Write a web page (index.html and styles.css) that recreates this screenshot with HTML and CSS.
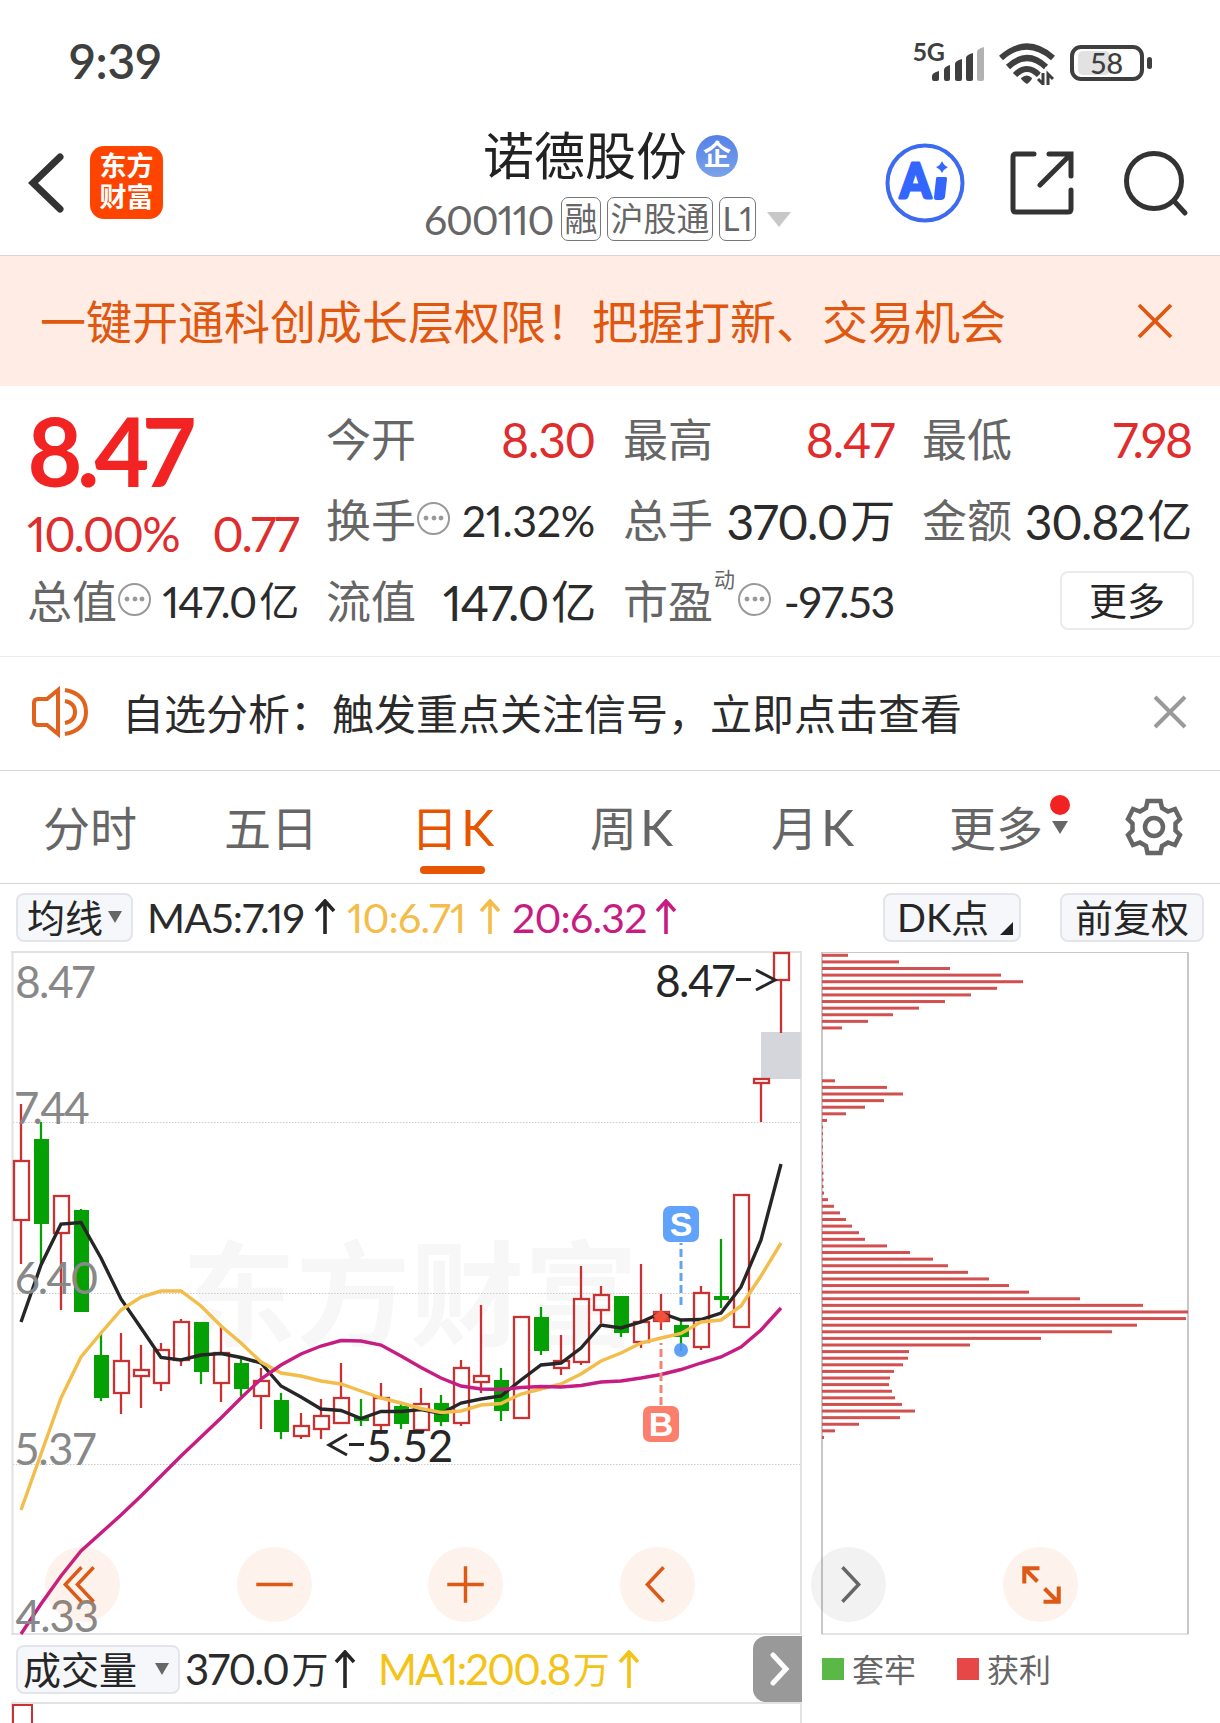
FILE: index.html
```
<!DOCTYPE html>
<html lang="zh-CN">

<head>
	<meta charset="UTF-8">
	<title>诺德股份 600110</title>
	<link rel="stylesheet" href="styles.css">
</head>

<body>

	<div class="status">
		<span class="clock">9:39</span>
		<div class="signals">
			<span class="net">5G</span>
			<svg class="bars" width="53" height="36" viewBox="0 0 53 36">
				<path d="M0 33v-3q0-3 7-5v8q0 2-2 2h-3q-2 0-2-2zM12 33v-9q0-3 6-5v14q0 2-2 2h-2q-2 0-2-2zM23 33v-15q0-3 7-5v20q0 2-2 2h-3q-2 0-2-2zM34 33v-21q0-3 7-5v26q0 2-2 2h-3q-2 0-2-2z" fill="#3f3f3f" />
				<path d="M45 33v-27q0-3 7-5v32q0 2-2 2h-3q-2 0-2-2z" fill="#b2b2b2" />
			</svg>
			<svg class="wifi" width="56" height="42" viewBox="0 0 56 42">
				<g fill="none" stroke="#3f3f3f" stroke-width="6">
					<path d="M2 15Q28 -8 54 15" />
					<path d="M9 24Q28 6 47 24" />
					<path d="M16 32Q28 20 40 32" />
				</g>
				<path d="M22 35q6-5 11 0q0 2-5 6q-6-4-6-6z" fill="#3f3f3f" />
				<path d="M44 30v11l-5-5M49 42v-11l5 5" fill="none" stroke="#fff" stroke-width="6" />
				<path d="M44 30v11l-5-5M49 42v-11l5 5" fill="none" stroke="#3f3f3f" stroke-width="3" />
			</svg>
			<div class="battery"><i></i><span>58</span></div>
		</div>
	</div>

	<header>
		<svg class="back" width="36" height="60" viewBox="0 0 36 60"><path d="M32 4L5 30L32 56" /></svg>
		<div class="logo"><span>东方</span><span>财富</span></div>
		<div class="stock">
			<div class="name">诺德股份<i>企</i></div>
			<div class="code"><b>600110</b><span>融</span><span>沪股通</span><span>L1</span><i></i></div>
		</div>
		<div class="actions">
			<svg width="80" height="80" viewBox="0 0 80 80">
				<circle cx="40" cy="40" r="37.5" fill="none" stroke="#3c6af0" stroke-width="4" />
				<text x="15" y="55" class="ai" textLength="31" lengthAdjust="spacingAndGlyphs">A</text>
				<path d="M52 34h9q1 0 1 2l-2 18q-1 3-4 3h-5q-2 0-2-3l2-18q0-2 1-2z" fill="#3366ff" />
				<path d="M57 18q2 5 6 6q-4 2-6 6q-2-4-6-6q4-1 6-6z" fill="#3366ff" />
			</svg>
			<svg width="64" height="64" viewBox="0 0 64 64" class="line">
				<path d="M24 3H6Q3 3 3 6V58Q3 61 6 61H58Q61 61 61 58V39M39 3H61V25M60 4L30 34" />
			</svg>
			<svg width="68" height="68" viewBox="0 0 68 68" class="line">
				<circle cx="32" cy="32" r="27.5" />
				<path d="M52 52L63 64" />
			</svg>
		</div>
	</header>

	<div class="banner">
		<span>一键开通科创成长层权限！把握打新、交易机会</span>
		<svg width="36" height="36" viewBox="0 0 36 36"><path d="M2 2L34 34M34 2L2 34" /></svg>
	</div>

	<section class="quote">
		<div class="price">
			<strong>8.47</strong>
			<p><span>10.00%</span><span>0.77</span></p>
		</div>
		<div class="cell"><label>今开</label><em class="red">8.30</em></div>
		<div class="cell"><label>最高</label><em class="red">8.47</em></div>
		<div class="cell"><label>最低</label><em class="red low">7.98</em></div>
		<div class="cell"><label>换手</label><i class="tip"></i><em class="small turnover">21.32%</em></div>
		<div class="cell"><label>总手</label><em>370.0<u>万</u></em></div>
		<div class="cell"><label>金额</label><em>30.82<u>亿</u></em></div>
		<div class="cell"><label>总值</label><i class="tip"></i><em class="small">147.0<u>亿</u></em></div>
		<div class="cell"><label>流值</label><em>147.0<u>亿</u></em></div>
		<div class="cell"><label>市盈</label><sup>动</sup><i class="tip"></i><em class="small">-97.53</em></div>
		<div class="cell"><button>更多</button></div>
	</section>

	<div class="notice">
		<svg class="horn" width="58" height="52" viewBox="0 0 58 52">
			<path d="M27 4L16 13H7Q3 13 3 17V35Q3 39 7 39H16L27 48ZM34 4Q55 8 55 26Q55 44 34 48M34 15Q44 17 44 26Q44 35 34 37" />
		</svg>
		<span>自选分析：触发重点关注信号，立即点击查看</span>
		<svg class="close" width="34" height="34" viewBox="0 0 34 34"><path d="M2 2L32 32M32 2L2 32" /></svg>
	</div>

	<nav>
		<a>分时</a>
		<a>五日</a>
		<a class="active">日<b>K</b></a>
		<a class="week">周<b>K</b></a>
		<a class="month">月<b>K</b></a>
		<a class="more">更多<i></i></a>
		<svg width="58" height="58" viewBox="-29 -29 58 58">
			<path d="M-6.5-26H6.5L8-19L14-15.500L21-18L26-8L21.500-3.500V3.500L26 8L21 18L14 15.500L8 19L6.500 26H-6.500L-8 19L-14 15.500L-21 18L-26 8L-21.500 3.500V-3.500L-26-8L-21-18L-14-15.500L-8-19Z" />
			<circle r="9" />
		</svg>
	</nav>

	<div class="ma">
		<button class="avg"><span>均线</span><i class="down"></i></button>
		<span class="ma5">MA5:7.19</span><svg class="up" width="22" height="36" viewBox="0 0 22 36"><path d="M11 2V35M2 12L11 2L20 12" /></svg>
		<span class="ma10">10:6.71</span><svg class="up gold" width="22" height="36" viewBox="0 0 22 36"><path d="M11 2V35M2 12L11 2L20 12" /></svg>
		<span class="ma20">20:6.32</span><svg class="up pink" width="22" height="36" viewBox="0 0 22 36"><path d="M11 2V35M2 12L11 2L20 12" /></svg>
		<button class="dk"><span>DK点</span><i></i></button>
		<button class="fq"><span>前复权</span></button>
	</div>

	<div class="chart">
		<svg width="1220" height="690" viewBox="0 949 1220 690">
			<text x="182" y="1337" class="watermark" textLength="456">东方财富</text>
			<g class="grid">
				<path d="M13 1122.500H801M13 1293.500H801M13 1464.500H801" />
			</g>
			<path class="frame" d="M12.500 952V1634M11 952H802M801 952V1634M11 1634H802" />
			<rect x="761" y="1032" width="40" height="47" fill="#d5d6dc" />
			<g id="candles"></g>
			<g id="averages"></g>

			<path d="M661 1343V1405" class="dash" stroke="#f5836f" />
			<path d="M653 1316L661 1310L669 1316L661 1324Z" fill="#f2503a" />
			<rect x="643" y="1406" width="36" height="36" rx="7" fill="#fb7f6c" />
			<text x="661" y="1436" class="mark">B</text>

			<path d="M681 1243V1306" class="dash" stroke="#64a2f2" />
			<circle cx="681" cy="1350" r="7" fill="#4c97f5" opacity=".9" />
			<rect x="663" y="1206" width="36" height="36" rx="7" fill="#61a2fb" />
			<text x="681" y="1236" class="mark">S</text>

			<g class="axis">
				<text x="15" y="998" textLength="80">8.47</text>
				<text x="15" y="1123.500" textLength="75">7.44</text>
				<text x="15" y="1294" textLength="84">6.40</text>
				<text x="15" y="1465" textLength="81">5.37</text>
				<text x="15" y="1632" textLength="84">4.33</text>
			</g>
			<g class="peak">
				<text x="655" y="997" textLength="80">8.47</text>
				<text x="367" y="1461.500" textLength="86">5.52</text>
				<path d="M736 979.500H751M756 970L775 980L756 990M349 1444.500H364M347 1434.500L329 1445L347 1455" />
			</g>

			<path d="M821 952.500H1189M821 1634H1189" class="thin" />
			<path d="M822 952V1634M1188 952V1634" class="thick" />
			<g id="chips"></g>
		</svg>
		<div class="tools">
			<i><svg viewBox="0 0 74 74"><path d="M36 20L20 37L36 54M48 20L32 37L48 54" /></svg></i>
			<i><svg viewBox="0 0 74 74"><path d="M19 37H55" /></svg></i>
			<i><svg viewBox="0 0 74 74"><path d="M19 37H55M37 19V55" /></svg></i>
			<i><svg viewBox="0 0 74 74"><path d="M43 20L27 37L43 54" /></svg></i>
			<i class="off"><svg viewBox="0 0 74 74"><path d="M31 20L47 37L31 54" /></svg></i>
			<i class="full"><svg viewBox="0 0 74 74"><path d="M21 36V21H36M21 21L34 34M40 54H55V39M54 54L41 41" /></svg></i>
		</div>
	</div>

	<div class="volume">
		<button class="vol"><span>成交量</span><i class="down"></i></button>
		<span class="total">370.0<u>万</u></span><svg class="up" width="22" height="38" viewBox="0 0 22 38"><path d="M11 2V38M2 12L11 2L20 12" /></svg>
		<span class="ma1">MA1:200.8<u>万</u></span><svg class="up yellow" width="22" height="38" viewBox="0 0 22 38"><path d="M11 2V38M2 12L11 2L20 12" /></svg>
		<div class="next"><svg width="20" height="34" viewBox="0 0 20 34"><path d="M3 3L16 17L3 31" /></svg></div>
		<div class="legend"><i></i><span>套牢</span><i class="gain"></i><span>获利</span></div>
	</div>

	<div class="volchart"><div></div></div>

	<script>
		// high, top, bottom, low, up or down
		var candles = [
			[1104, 1161, 1220, 1264, 1], [1122, 1139, 1224, 1264, 0], [1196, 1196, 1233, 1310, 1], [1209, 1210, 1312, 1312, 0],
			[1333, 1355, 1398, 1401, 0], [1333, 1361, 1393, 1414, 1], [1345, 1370, 1376, 1408, 1], [1343, 1350, 1383, 1391, 1],
			[1319, 1322, 1360, 1366, 1], [1322, 1322, 1372, 1384, 0], [1326, 1353, 1383, 1402, 1], [1359, 1363, 1389, 1396, 0],
			[1368, 1381, 1396, 1429, 1], [1393, 1400, 1432, 1439, 0], [1413, 1426, 1436, 1439, 1], [1399, 1416, 1429, 1439, 1],
			[1363, 1398, 1423, 1423, 1], [1399, 1417, 1421, 1426, 0], [1383, 1398, 1425, 1434, 1], [1403, 1406, 1424, 1429, 0],
			[1388, 1404, 1430, 1430, 1], [1395, 1403, 1422, 1426, 0], [1360, 1368, 1423, 1426, 1], [1305, 1376, 1382, 1393, 1],
			[1368, 1380, 1411, 1421, 0], [1317, 1317, 1418, 1419, 1], [1307, 1317, 1351, 1355, 0], [1335, 1361, 1368, 1375, 1],
			[1266, 1299, 1362, 1365, 1], [1286, 1295, 1310, 1323, 1], [1296, 1296, 1333, 1337, 0], [1264, 1322, 1342, 1348, 1],
			[1294, 1312, 1321, 1330, 1], [1321, 1325, 1337, 1351, 0], [1286, 1293, 1347, 1350, 1], [1239, 1296, 1300, 1308, 0],
			[1195, 1195, 1327, 1327, 1], [1079, 1079, 1083, 1122, 1], [953, 953, 980, 1033, 1]
		];
		var averages = [
			["#262626", [1322, 1265, 1224, 1222.5, 1258, 1299, 1328, 1357.5, 1360, 1355, 1353.5, 1357.5, 1363, 1386, 1397, 1409, 1410.5, 1418.5, 1411.5, 1411.5, 1409.5, 1413.5, 1403, 1399, 1396, 1380, 1365, 1363, 1348, 1325, 1328, 1322, 1313, 1320, 1319.5, 1313, 1287, 1240, 1164]],
			["#f2bd4a", [1510, 1454, 1398, 1357, 1333, 1310, 1297, 1291, 1291, 1306, 1326, 1343, 1362, 1373, 1376, 1381, 1384, 1391, 1398, 1403, 1408.5, 1412.5, 1411, 1405, 1403.5, 1394, 1389, 1384, 1374, 1361, 1353, 1343, 1338, 1333.5, 1322, 1320, 1306, 1276, 1243]],
			["#c71d82", [1634, 1604, 1576, 1551, 1533, 1515, 1496, 1476, 1456, 1437, 1418, 1398, 1379, 1365, 1354, 1346, 1340.5, 1341, 1345, 1356, 1367.5, 1378, 1386, 1389, 1389.5, 1387.5, 1386.5, 1387, 1385.5, 1382, 1381, 1378, 1374.5, 1369.5, 1363, 1357, 1347, 1330, 1308]]
		];
		// bar lengths of the cost distribution, top to bottom
		var chips = [26, 77, 128, 179, 201, 175, 149, 123, 97, 71, 46, 20, 0, 0, 0, 0, 0, 0, 0, 13, 65, 81, 62, 43, 24, 5,
			1, 1, 1, 1, 1, 1, 1, 1.5, 1.5, 1.5, 2, 6, 12, 18, 24, 30, 37, 43, 65, 88, 111, 126, 146, 167, 187, 207, 258, 321, 366, 364,
			315, 290, 219, 148, 87, 86, 81, 72, 68, 67, 70, 73, 80, 93, 78, 37, 13, 2];

		var html = "";
		candles.forEach(function (c, i) {
			var x = 21 + i * 20;
			if (c[4]) {
				html += '<path class="rise" d="M' + x + ' ' + c[0] + 'V' + c[1] + 'M' + x + ' ' + c[2] + 'V' + c[3] + '"/>';
				html += '<rect class="rise" x="' + (x - 7) + '" y="' + c[1] + '" width="15" height="' + (c[2] - c[1]) + '"/>';
			} else {
				html += '<path class="fall" d="M' + x + ' ' + c[0] + 'V' + c[3] + '"/>';
				html += '<rect x="' + (x - 7) + '" y="' + c[1] + '" width="15" height="' + (c[2] - c[1]) + '" fill="#04a004"/>';
			}
		});
		// the buy day is drawn solid
		html += '<rect x="654" y="1312" width="15" height="9" fill="#d8453a"/>';
		document.getElementById("candles").innerHTML = html;

		html = "";
		averages.forEach(function (a) {
			var points = a[1].map(function (y, i) {
				return (21 + i * 20) + "," + y;
			});
			html += '<polyline points="' + points.join(" ") + '" stroke="' + a[0] + '"/>';
		});
		document.getElementById("averages").innerHTML = html;

		html = "";
		chips.forEach(function (w, i) {
			html += '<rect x="822" y="' + (953.8 + i * 6.605) + '" width="' + w + '" height="3"/>';
		});
		document.getElementById("chips").innerHTML = html;
	</script>
</body>

</html>
```
FILE: styles.css
```
* {
	box-sizing: border-box;
}

body {
	margin: 0;
	width: 1220px;
	height: 1723px;
	overflow: hidden;
	background-color: #fff;
	color: #2b2b2b;
	font-family: Lato, "Noto Sans CJK SC", sans-serif;
	font-variant-numeric: proportional-nums;
}

svg {
	display: block;
	flex: none;
}

i,
em {
	font-style: normal;
}

u {
	text-decoration: none;
}

span,
label,
a,
em {
	white-space: nowrap;
}

button {
	font-family: inherit;
	color: #262626;
	background-color: #f6f7fa;
	border: 2px solid #e3e5ea;
	border-radius: 8px;
	height: 49px;
	padding: 0;
	display: flex;
	align-items: center;
	flex: none;
	white-space: nowrap;
}

button span,
.legend span {
	padding-bottom: 3px;
}

/* status bar */

.status {
	height: 110px;
	padding: 40px 76px 0 69px;
	display: flex;
	justify-content: space-between;
}

.clock {
	font-size: 48px;
	line-height: 42px;
	font-weight: 600;
	color: #3f3f3f;
}

.signals {
	display: flex;
	height: 42px;
	padding-top: 1px;
	color: #3f3f3f;
}

.net {
	font-size: 25px;
	line-height: 20px;
	font-weight: 700;
	width: 19px;
}

.bars {
	margin-top: 5px;
}

.wifi {
	margin: 2px 15px 0 14px;
}

.battery {
	position: relative;
	width: 74px;
	height: 36px;
	margin-top: 4px;
	border: 4px solid #3f3f3f;
	border-radius: 11px;
	text-align: center;
	font-size: 29px;
	line-height: 27px;
	font-weight: 500;
}

.battery i {
	position: absolute;
	left: 4px;
	top: 2px;
	width: 32px;
	height: 24px;
	border-radius: 5px;
	background-color: #e2e2e2;
}

.battery span {
	position: relative;
}

.battery::after {
	content: "";
	position: absolute;
	right: -12px;
	top: 8px;
	width: 5px;
	height: 12px;
	border-radius: 3px;
	background-color: #3f3f3f;
}

/* header */

header {
	height: 146px;
	padding: 0 30px 0 28px;
	display: flex;
	justify-content: space-between;
	border-bottom: 1px solid #d5d5d5;
}

.back {
	margin-top: 43px;
	fill: none;
	stroke: #333;
	stroke-width: 7;
	stroke-linecap: round;
}

.logo {
	width: 73px;
	height: 73px;
	margin: 36px 0 0 26px;
	padding-top: 4px;
	border-radius: 14px;
	background-color: #ff4400;
	color: #fff;
	font-size: 27px;
	line-height: 31px;
	font-weight: 700;
	text-align: center;
}

.logo span {
	display: block;
}

.stock {
	flex: 1;
	padding: 16px 0 0 261px;
}

.name {
	display: flex;
	align-items: center;
	margin-left: 59px;
	font-size: 51px;
	line-height: 60px;
	color: #222;
}

.name i {
	width: 42px;
	height: 42px;
	margin: 0 0 0 9px;
	border-radius: 50%;
	background: linear-gradient(#5580ea, #7aa3e8);
	color: #fff;
	font-size: 28px;
	line-height: 39px;
	font-weight: 700;
	text-align: center;
}

.code {
	display: flex;
	align-items: center;
	height: 46px;
	margin-top: 10px;
	color: #666;
}

.code b {
	width: 137px;
	font-size: 41px;
	font-weight: 400;
	letter-spacing: -1.200px;
}

.code span {
	height: 44px;
	padding: 0 2.500px;
	margin-right: 6px;
	border: 1.500px solid #777;
	border-radius: 7px;
	font-size: 33px;
	line-height: 40px;
}

.code i {
	margin-left: 5px;
	border: 12px solid transparent;
	border-top: 15px solid #c8c8c8;
	border-bottom: 0;
}

.actions {
	display: flex;
	align-items: flex-start;
	padding-top: 33px;
	gap: 45px;
}

.actions svg + svg {
	margin-top: 8px;
}

.actions svg + svg + svg {
	margin-top: 6px;
	margin-left: 3px;
}

.ai {
	font-family: Lato, sans-serif;
	font-size: 48px;
	font-weight: 900;
	fill: #3366ff;
	stroke: #3366ff;
	stroke-width: 3;
	stroke-linejoin: round;
}

.line {
	fill: none;
	stroke: #333;
	stroke-width: 5;
	stroke-linecap: round;
}

/* banner */

.banner {
	height: 130px;
	padding: 0 47px 0 40px;
	display: flex;
	align-items: center;
	justify-content: space-between;
	background-color: #ffece4;
	color: #e0570f;
	font-size: 46px;
}

.banner span {
	padding-bottom: 5px;
}

.banner svg {
	fill: none;
	stroke: #e0570f;
	stroke-width: 3.800;
}

/* quote */

.quote {
	height: 271px;
	padding: 12px 27px 0;
	display: grid;
	grid-template-columns: 271px 269px 271px 269px;
	grid-template-rows: 81px 81px 81px;
	column-gap: 28px;
	border-bottom: 1px solid #ebebeb;
}

.price {
	grid-row: span 2;
	color: #f22323;
}

.price strong {
	display: block;
	font-size: 95px;
	line-height: 105px;
	font-weight: 700;
	letter-spacing: -6px;
}

.price p {
	display: flex;
	justify-content: space-between;
	margin: 4px 0 0;
	font-size: 48px;
	line-height: 54px;
	color: #df2d2d;
	letter-spacing: -1.800px;
}

.cell {
	display: flex;
	align-items: center;
	min-width: 0;
}

.cell label {
	padding-bottom: 3px;
	font-size: 45px;
	color: #666;
}

.cell em {
	margin-left: auto;
	padding-top: 1px;
	font-size: 48px;
	letter-spacing: -1.200px;
}

.cell em u {
	font-size: 45px;
	margin-left: 3px;
	position: relative;
	top: -2px;
}

.cell em.small {
	font-size: 43px;
}

.cell em.turnover {
	letter-spacing: -.3px;
}

.cell em.small u {
	font-size: 40px;
}

.cell em.red {
	color: #e02c2c;
}

.cell em.low {
	letter-spacing: -2.200px;
}

.tip {
	flex: none;
	width: 33px;
	height: 33px;
	margin: 0 0 3px 1px;
	border: 2.500px solid #999;
	border-radius: 50%;
	background-image: radial-gradient(circle, #999 2px, transparent 2.800px), radial-gradient(circle, #999 2px, transparent 2.800px), radial-gradient(circle, #999 2px, transparent 2.800px);
	background-size: 8px 8px;
	background-repeat: no-repeat;
	background-position: 3px center, center, 18px center;
}

.cell sup {
	font-size: 21px;
	line-height: 21px;
	width: 23px;
	color: #666;
	align-self: flex-start;
	margin: 8px 0 0 1px;
}

.cell button {
	width: 134px;
	height: 59px;
	margin-left: auto;
	margin-right: -3px;
	padding-bottom: 4px;
	justify-content: center;
	font-size: 38px;
	background-color: #fff;
	border-color: #ebebeb;
}

/* notice */

.notice {
	height: 114px;
	padding: 0 33px 4px 31px;
	display: flex;
	align-items: center;
	font-size: 42px;
	border-bottom: 1px solid #d5d5d5;
}

.notice span {
	flex: 1;
	margin-left: 33px;
}

.horn {
	fill: none;
	stroke: #e0621d;
	stroke-width: 4;
}

.close {
	stroke: #999;
	stroke-width: 4;
}

/* tabs */

nav {
	height: 113px;
	display: flex;
	align-items: center;
	border-bottom: 1px solid #d5d5d5;
	font-size: 47px;
	color: #666;
	padding: 0 0 4px 43px;
}

nav a {
	position: relative;
	width: 181px;
}

nav b {
	font-weight: 400;
	font-size: 50px;
	margin-left: 3px;
}

nav .active {
	color: #e85500;
	padding-left: 6px;
}

nav .week,
nav .month {
	padding-left: 4px;
}

nav .active::after {
	content: "";
	position: absolute;
	left: 15px;
	bottom: -14px;
	width: 65px;
	height: 8px;
	border-radius: 4px;
	background-color: #e85500;
}

nav .more {
	margin-left: 1px;
	width: 176px;
}

nav .more i {
	position: absolute;
	left: 103px;
	top: 30px;
	border: 8px solid transparent;
	border-top: 13px solid #666;
	border-bottom: 0;
}

nav .more::after {
	content: "";
	position: absolute;
	left: 101px;
	top: 4px;
	width: 20px;
	height: 20px;
	border-radius: 50%;
	background-color: #f22222;
}

nav svg {
	margin-top: 4px;
	fill: none;
	stroke: #666;
	stroke-width: 4.500;
}

/* indicator row */

.ma {
	height: 65px;
	padding: 1px 16px 0;
	display: flex;
	align-items: center;
	font-size: 41px;
}

.ma button {
	font-size: 38px;
}

.down {
	border: 7.500px solid transparent;
	border-top: 12px solid #666;
	border-bottom: 0;
}

.ma .avg {
	width: 117px;
	padding-left: 9px;
	margin-right: 14px;
}

.avg .down {
	margin-left: 5px;
}

.ma5,
.ma10,
.ma20 {
	width: 167px;
	letter-spacing: -.8px;
}

.ma10 {
	width: 132px;
	margin-left: 11px;
	color: #f4bc48;
}

.ma20 {
	width: 143px;
	margin-left: 11px;
	color: #c71d82;
}

.up {
	fill: none;
	stroke: #262626;
	stroke-width: 3.600;
}

.gold {
	stroke: #f4bc48;
}

.pink {
	stroke: #c71d82;
}

.yellow {
	stroke: #f4c318;
}

.ma .dk {
	position: relative;
	width: 138px;
	margin-left: auto;
	padding-left: 12px;
}

.dk i {
	position: absolute;
	right: 6px;
	bottom: 5px;
	border-left: 13px solid transparent;
	border-bottom: 13px solid #222;
}

.ma .fq {
	width: 144px;
	margin-left: 39px;
	justify-content: center;
}

/* k line and cost distribution */

.chart {
	position: relative;
	height: 690px;
}

.chart text {
	font-family: Lato, "Noto Sans CJK SC", sans-serif;
}

.chart .watermark {
	font-size: 114px;
	font-weight: 700;
	fill: #f7f7f7;
}

.grid path {
	stroke: #ccc;
	stroke-width: 1;
	stroke-dasharray: 1.500 1.500;
}

.frame {
	fill: none;
	stroke: #e2e2e2;
	stroke-width: 2;
}

.thin {
	stroke: #c8c8c8;
}

.thick {
	stroke: #c8c8c8;
	stroke-width: 2;
}

.rise {
	fill: none;
	stroke: #c83232;
	stroke-width: 2.300;
}

.fall {
	stroke: #04a004;
	stroke-width: 2.300;
}

#averages {
	fill: none;
	stroke-width: 3.400;
}

#chips {
	fill: #d25050;
}

.dash {
	stroke-width: 3;
	stroke-dasharray: 8 4;
	stroke-dashoffset: 6;
}

.chart .mark {
	font-family: "Liberation Sans", sans-serif;
	font-size: 34px;
	font-weight: 700;
	fill: #fff;
	text-anchor: middle;
}

.axis text {
	font-size: 44px;
	fill: #888;
}

.peak text {
	font-size: 44px;
	fill: #262626;
}

.peak path {
	fill: none;
	stroke: #262626;
	stroke-width: 3;
}

.tools {
	position: absolute;
	left: 45px;
	top: 598px;
	width: 1033px;
	display: flex;
	justify-content: space-between;
}

.tools i {
	width: 75px;
	height: 75px;
	border-radius: 50%;
	background-color: rgba(232, 88, 10, .08);
}

.tools svg {
	fill: none;
	stroke: #dd5a16;
	stroke-width: 3.400;
}

.tools .full svg {
	stroke-width: 4;
}

.tools .off {
	background-color: rgba(0, 0, 0, .05);
}

.tools .off svg {
	stroke: #666;
}

/* volume */

.volume {
	height: 66px;
	margin-top: -3px;
	padding-left: 16px;
	position: relative;
	display: flex;
	align-items: center;
	font-size: 42px;
	letter-spacing: -1.500px;
}

.volume u {
	font-size: 37px;
	margin-left: 3px;
	position: relative;
	top: -1px;
}

.vol {
	width: 164px;
	padding-left: 5px;
	font-size: 38px;
}

.vol .down {
	margin-left: 18px;
}

.total {
	width: 149px;
	margin-left: 5px;
}

.ma1 {
	width: 240px;
	margin-left: 22px;
	letter-spacing: -1.800px;
	color: #f4c318;
}

.next {
	width: 49px;
	height: 66px;
	margin-left: 113px;
	padding: 16px 0 0 17px;
	border-radius: 13px 0 0 13px;
	background-color: #999;
}

.next path {
	fill: none;
	stroke: #fff;
	stroke-width: 5;
	stroke-linecap: round;
}

.legend {
	display: flex;
	align-items: center;
	margin-left: 20px;
	font-size: 32px;
	letter-spacing: 0;
	color: #666;
}

.legend i {
	width: 22px;
	height: 22px;
	margin-right: 8px;
	background-color: #5cb846;
}

.legend .gain {
	margin-left: 41px;
	background-color: #e64848;
}

.volchart {
	width: 791px;
	height: 21px;
	margin-left: 11px;
	border: 2px solid #e2e2e2;
	border-bottom: 0;
}

.volchart div {
	width: 21px;
	height: 20px;
	margin-left: -1px;
	border: 2px solid #c83232;
	border-bottom: 0;
}
```
